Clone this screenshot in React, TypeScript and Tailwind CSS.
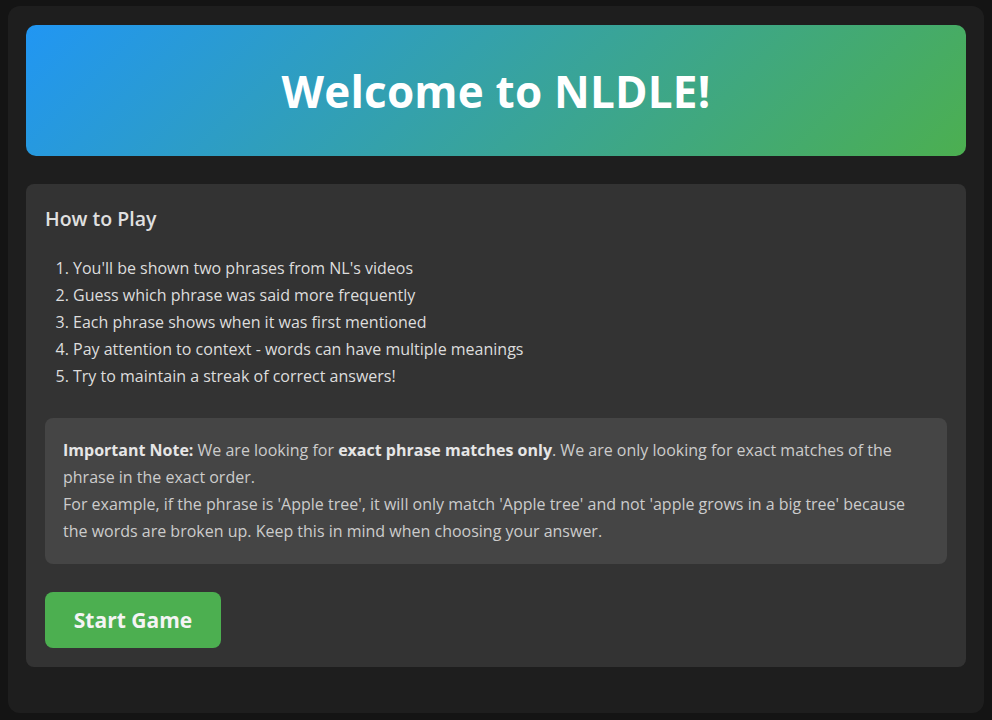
export default function App() {
  const steps = [
    "You'll be shown two phrases from NL's videos",
    "Guess which phrase was said more frequently",
    "Each phrase shows when it was first mentioned",
    "Pay attention to context - words can have multiple meanings",
    "Try to maintain a streak of correct answers!",
  ];

  return (
    <div
      className="min-h-[720px] bg-[#141414] px-2 pt-[6px] pb-[6px]"
      style={{ fontFamily: '"Open Sans", "Noto Sans", sans-serif' }}
    >
      <div className="rounded-xl bg-[#1e1e1e] px-[18px] pt-[19px] pb-[46px]">
        {/* header banner */}
        <div className="flex h-[131px] items-center justify-center rounded-[10px] bg-[linear-gradient(135deg,#2196f3,#4caf50)]">
          <h1 className="text-[44px] font-bold tracking-[0.2px] text-white">Welcome to NLDLE!</h1>
        </div>

        {/* rules card */}
        <div className="mt-7 rounded-lg bg-[#333333] px-[19px] pt-[20px] pb-[19px]">
          <h2 className="text-[19.5px] font-semibold text-[#e0e0e0]">How to Play</h2>
          <ol className="mt-[22px] list-decimal pl-[28px] text-[16px] leading-[27px] text-[#dddddd]">
            {steps.map((s) => (
              <li key={s}>{s}</li>
            ))}
          </ol>

          <div className="mt-[28px] rounded-lg bg-[#454545] px-[18px] py-[19px] text-[16px] leading-[27px] text-[#cccccc]">
            <p>
              <strong className="text-[#e6e6e6]">Important Note:</strong> We are looking for{" "}
              <strong className="text-[#e6e6e6]">exact phrase matches only</strong>. We are only looking
              for exact matches of the phrase in the exact order.
            </p>
            <p>
              For example, if the phrase is 'Apple tree', it will only match 'Apple tree' and not 'apple
              grows in a big tree' because the words are broken up. Keep this in mind when choosing your
              answer.
            </p>
          </div>

          <button className="mt-7 h-[56px] w-[176px] rounded-lg bg-[#4caf50] text-[21px] font-bold text-[#f4f4f4]">
            Start Game
          </button>
        </div>
      </div>
    </div>
  );
}
